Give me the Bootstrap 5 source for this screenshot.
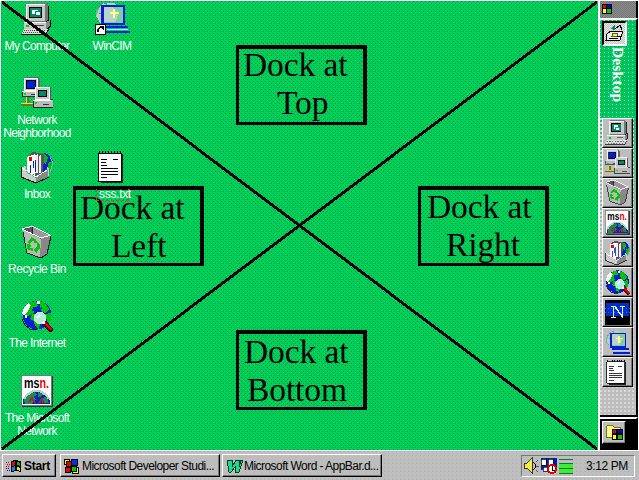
<!DOCTYPE html>
<html lang="en">
<head>
<meta charset="utf-8">
<meta name="viewport" content="width=device-width, initial-scale=1">
<title>Desktop</title>
<link href="https://cdn.jsdelivr.net/npm/bootstrap@5.3.0/dist/css/bootstrap.min.css" rel="stylesheet">
<style>
body{width:639px;height:480px;font:12px/14px "Liberation Sans",sans-serif;letter-spacing:-.55px;color:#000;background:#bdbdbd}
svg{display:block;flex:none;shape-rendering:crispEdges}
.desk{width:598px;height:450px;border-left:1px solid #fff;border-top:1px solid #fff;
 background:radial-gradient(circle at .5px .5px,#009848 .6px,transparent .7px) 0 0/4px 4px,radial-gradient(circle at .5px .5px,#009848 .6px,transparent .7px) 2px 2px/4px 4px,#00d058}
.shortcut{width:76px;color:#fff;text-align:center;line-height:13px;letter-spacing:-.65px}
.shortcut>div{padding-top:5px}
.spot{position:absolute}
.dock{width:131px;height:80px;border:solid #000;border-width:4px 4px 3px 3px;font:33.5px/38px "Liberation Serif",serif;letter-spacing:-.1px;white-space:pre}
.side{width:41px;height:450px;border-top:1px solid #fff;border-left:2px solid #fff;border-right:1px solid #fff;background:#bdbdbd}
.side>*{border-right:2px solid #000}
.head{height:17px;background:repeating-conic-gradient(#777 0 25%,#8a8a8a 0 50%) 0 0/2px 2px}
.green{height:100px;border-top:2px solid #fff;background:radial-gradient(circle at .5px .5px,#70e8a8 .6px,transparent .7px) 0 0/4px 4px,radial-gradient(circle at .5px .5px,#009850 .6px,transparent .7px) 2px 2px/4px 4px,#00c460}
.fade-area{height:297px;background:radial-gradient(circle at 1px 1px,#d8d8d8 .8px,transparent .9px) 0 0/4px 4px,linear-gradient(#20c070,#70bd98 60px,#bdbdbd 145px)}
.tray-end{border-top:2px solid #fff}
.raised{background:#bdbdbd;border:1px solid;border-color:#fff #000 #000 #fff;box-shadow:inset -1px -1px #777}
.tool{width:31px;height:29.9px}
.sunk{border:1px solid;border-color:#777 #fff #fff #777}
.pressed{width:25px;height:25px;border:2px solid;border-color:#000 #fff #fff #000;background:repeating-conic-gradient(#e4e4e4 0 25%,#c4c4c4 0 50%) 0 0/2px 2px}
.vert{writing-mode:vertical-rl;width:18px;margin-left:9px;margin-top:-3px;font:bold 15.5px/18px "Liberation Serif",serif;letter-spacing:.15px;color:#fff}
.bar{height:30px;border-top:1px solid #fff;background:radial-gradient(circle at .5px .5px,#b0b0b0 .6px,transparent .7px) 0 0/4px 4px,#bebebe}
.task{height:23px}
.filename{width:33px;height:12px;line-height:10px;padding-left:2px;border:1px dashed #e04020;border-top:0;letter-spacing:-.3px}
</style>
<script src="https://cdn.jsdelivr.net/npm/bootstrap@5.3.0/dist/js/bootstrap.bundle.min.js"></script>
</head>
<body class="overflow-hidden">
<svg width="0" height="0" class="spot" aria-hidden="true"><defs>
 <symbol id="pc" viewBox="0 0 32 32">
  <path d="M6 0h18l3 2v16l-2 2H6z" fill="#777"/><path d="M5 1h19v17H5z" fill="#c8c8c8"/><path d="M5 1.5h19M5.500 1v17" stroke="#fff"/><path d="M8 4h13v11H8z" fill="#000"/><path d="M9 5h11v9H9z" fill="#008c60"/><path d="M11 7h6v4h-6z" fill="#fff"/><path d="M14 9h5v4h-5z" fill="#e8ffff" stroke="#007878"/>
  <path d="M27 3v15l-3 3" fill="none" stroke="#000"/><path d="M3 19h23l3-2v7l-3 3H3z" fill="#888"/><path d="M3 19h22v7H3z" fill="#c8c8c8"/><path d="M3 19.500h22" stroke="#fff"/><path d="M5 22h3v2H5z" fill="#0c0"/><path d="M15 22.500h8" stroke="#444"/><path d="M29 17v7l-3 3" stroke="#000" fill="none"/>
  <path d="M3 26h21l4 0-3 6H0z" fill="#ddd"/><path d="M0 31.500h25l3-5" stroke="#111" fill="none"/><path d="M3 27.500h22M2 29.500h22" stroke="#444" stroke-dasharray="1 1" fill="none"/></symbol>
 <symbol id="net" viewBox="0 0 32 32">
  <path d="M4 0h13l2 2v13H4z" fill="#666"/><path d="M3 1h13v12H3z" fill="#c8c8c8" stroke="#fff"/><path d="M5 3h9v8H5z" fill="#0020d8" stroke="#000"/><path d="M1 14h16l2-1v6H1z" fill="#bbb" stroke="#333"/><path d="M1 14h16" stroke="#fff"/><path d="M3 17h2" stroke="#0d0" stroke-width="2"/><path d="M10 17h5" stroke="#333"/>
  <path d="M6 20v6M0 27h14" stroke="#777700" stroke-width="3"/><path d="M5 20v6M0 26h14" stroke="#dede70"/>
  <path d="M15 10h13l2 2v12H15z" fill="#555"/><path d="M14 10h14v12H14z" fill="#c8c8c8" stroke="#fff"/><path d="M17 13h8v6h-8z" fill="#008c60" stroke="#000"/><path d="M12 23h18l2-1v8H12z" fill="#bbb" stroke="#222"/><path d="M12 23h18" stroke="#fff"/><path d="M14 26h2" stroke="#0d0" stroke-width="2"/><path d="M22 27h6" stroke="#333"/></symbol>
 <symbol id="inbox" viewBox="0 0 32 32">
  <circle cx="22" cy="12" r="10" fill="#0020d8"/><path d="M16 3l6-1 5 4-2 7-4-3zM27 12l4-2v7l-4 4z" fill="#00c000"/><path d="M29 6l3 6-3 9" stroke="#9ac" fill="none"/>
  <path d="M6 6L12 1l11 2-1 20-9 3z" fill="#555"/><path d="M6 6l8-3v21l-8-3z" fill="#fff"/><path d="M14 4l3-1v19h-3zM18 5l2-1v18h-2z" fill="#eee"/><path d="M8 6h3v4H8z" fill="#e00"/><path d="M9 14v8M12 10v7M14 9v12" stroke="#0020c8"/>
  <path d="M1 16l4-1v6l10 6 11-7v-4l2 2v7L15 32 1 26z" fill="#ccc"/><path d="M15 27l12-8v7L15 32z" fill="#888"/><path d="M0 16v10l15 6 13-6" stroke="#111" fill="none"/><path d="M1 17l14 9 11-7" stroke="#fff" fill="none"/></symbol>
 <symbol id="bin" viewBox="0 0 32 32">
  <path d="M1 3l10-3 19 9-4 19-7 4L6 27z" fill="#b8b8b8"/><path d="M20 13l10-4-4 19-7 4z" fill="#888"/><path d="M2 3l9-2 18 8-9 4z" fill="#555"/><path d="M12 1v9l9 3 8-4z" fill="#999"/><path d="M1 3l19 9 10-3M1 3l10-3 18 9" stroke="#fff" fill="none"/><path d="M2 6l4 21 14 5 6-4 4-18M11 1v7" stroke="#222" fill="none"/>
  <path d="M8 17l3-4 4 2M17 17l1 5-3 2M12 24l-5-2 1-3" stroke="#00c800" stroke-width="2.6" fill="none"/><path d="M13 12l4 5h-4zM16 21v6l-4-3zM5 19l4-2 1 4z" fill="#00c800"/></symbol>
 <symbol id="globe" viewBox="0 0 32 32">
  <circle cx="16" cy="15" r="14.5" fill="#0020d8"/><path d="M4 7l6-5 5-1 2 5-4 3v4l-6 3-4-2zM18 1l6 2 4 6-3 4-4-1-2-6zM11 14l9 1 3 5-4 4-1 5-4-3-1-5-4-2zM24 14l6-1v7l-3 3z" fill="#00c800"/><path d="M3 7l4-4 3 2-3 6-4 4-2-1zM16 1h3v3h-3zM4 15h2v3H4z" fill="#fff"/><path d="M12 8h9M11 10h8" stroke="#0020d8" stroke-width="2" stroke-dasharray="3 1"/><path d="M1 19l3 6 5 4 7 1" stroke="#000" fill="none"/></symbol>
 <symbol id="web" viewBox="0 0 32 32"><use href="#globe"/><circle cx="19" cy="18" r="5.500" fill="#a8f0dc" stroke="#ddd" stroke-width="1.5"/><path d="M16 18l3-3" stroke="#fff" stroke-width="2"/><path d="M23 23l8 8" stroke="#500" stroke-width="5"/><path d="M24 23l7 7" stroke="#e00" stroke-width="2.5"/><path d="M22 22l2 2" stroke="#fff" stroke-width="2"/></symbol>
 <symbol id="msn" viewBox="0 0 32 32"><path d="M1 1h31v31H1z" fill="#333"/><path d="M0 0h30v30H0z" fill="#fff" stroke="#777"/><text x="3" y="13" font-family="Liberation Sans,sans-serif" font-weight="bold" font-size="14" letter-spacing="0" textLength="25" lengthAdjust="spacingAndGlyphs">ms<tspan fill="#e00">n.</tspan></text>
  <path d="M2 29v-4l4-5 6-4h7l6 4 4 6v3z" fill="#0028b8"/><path d="M3 25l5-6 6-2 2 3-4 2 3 3-5 4H4zM17 17l5 2-2 3h-3zM20 23l6-1 2 6h-7z" fill="#208850"/><path d="M8 27l3-4 3 5M18 28l3-4 2 4" stroke="#a02828" stroke-width="2" fill="none"/><path d="M3 24l3-4 6-4h7l6 4 3 4" stroke="#bcc" fill="none" stroke-width="2"/></symbol>
 <symbol id="note" viewBox="0 0 32 32"><path d="M5 3h22v29H5z" fill="#222"/><path d="M2 2h23v28H2z" fill="#fff" stroke="#000"/><path d="M3 1h22" stroke="#000" stroke-width="3" stroke-dasharray="1 2"/><path d="M4 3h20" stroke="#fff" stroke-dasharray="2 1"/><path d="M5 8h6M17 8h5M5 11h5M5 14h6M5 17h17M5 20h17M5 23h17M5 26h6" stroke="#000"/></symbol>
 <symbol id="cim" viewBox="0 0 34 32"><circle cx="13" cy="12" r="11.500" fill="#70b890"/><path d="M7 1h12l5 5v15H6l-4-7z" fill="#b8d0c4"/><path d="M3 7l4-5 5-1M2 15l3 5M7 5l9 8M12 1v18M5 11h16" stroke="#668877" fill="none" stroke-dasharray="2 1"/><path d="M8 4h20v18H8z" fill="none" stroke="#0020d8" stroke-width="2"/><path d="M9 5h18v16H9z" fill="#80cca4"/><path d="M9 5h9l5 7-3 8H9z" fill="#b8d4c8"/><path d="M19 7v9M15 11h9" stroke="#ffff90" stroke-width="1.5"/><path d="M28 5v18M10 25h22M11 30h23" stroke="#0020d8" stroke-width="2"/><path d="M12 27h20" stroke="#c8d8ff"/></symbol>
 <symbol id="logo" viewBox="0 0 10 10"><path d="M0 0h10v10H0z" fill="#000"/><path d="M1 1h3v3H1z" fill="#e00"/><path d="M5 1h4v3H5z" fill="#00d"/><path d="M1 5h3v4H1z" fill="#ff0"/><path d="M5 5h4v4H5z" fill="#0c0"/></symbol>
</defs></svg>

<div class="d-flex">
 <main class="desk position-relative overflow-hidden">
  <div class="spot shortcut" style="left:-2px;top:1px"><svg class="mx-auto" width="32" height="33"><use href="#pc"/></svg><div>My Computer</div></div>
  <div class="spot shortcut" style="left:73px;top:1px"><svg class="mx-auto" width="36" height="33" viewBox="0 0 34 33" preserveAspectRatio="none"><use href="#cim" width="34" height="32"/><path d="M1 22h10v10H1z" fill="#fff" stroke="#000"/><path d="M3.500 30v-2l3-3" fill="none" stroke="#000" stroke-width="1.5"/><path d="M5 24h4v4z"/></svg><div>WinCIM</div></div>
  <div class="spot shortcut" style="left:-2px;top:76px"><svg class="mx-auto" width="32" height="32"><use href="#net"/></svg><div>Network<br>Neighborhood</div></div>
  <div class="spot shortcut" style="left:-2px;top:150px"><svg class="mx-auto" width="32" height="32"><use href="#inbox"/></svg><div>Inbox</div></div>
  <div class="spot shortcut" style="left:73px;top:150px"><svg class="mx-auto" width="32" height="32"><use href="#note"/></svg></div>
  <div class="spot shortcut" style="left:-2px;top:225px"><svg class="mx-auto" width="32" height="32"><use href="#bin"/></svg><div style="letter-spacing:-.5px">Recycle Bin</div></div>
  <div class="spot shortcut" style="left:-2px;top:299px"><svg class="mx-auto" width="32" height="32"><use href="#web"/></svg><div>The Internet</div></div>
  <div class="spot shortcut" style="left:-2px;top:374px"><svg class="mx-auto" width="32" height="32"><use href="#msn"/></svg><div>The Microsoft<br>Network</div></div>
  <svg class="spot top-0 start-0" width="597" height="449"><path d="M1 1L596 448M596 1L1 448" stroke="#000" stroke-width="3"/></svg>
  <div class="spot dock" style="left:235px;top:44px"><div style="padding-left:4px;margin-top:-3px">Dock at</div><div style="padding-left:38px">Top</div></div>
  <div class="spot dock" style="left:72px;top:185px"><div style="padding-left:4px;margin-top:-1px">Dock at</div><div style="padding-left:35px">Left</div></div>
  <div class="spot dock" style="left:417px;top:185px"><div style="padding-left:6px;margin-top:-2px">Dock at</div><div style="padding-left:25px">Right</div></div>
  <div class="spot dock" style="left:235px;top:329px"><div style="padding-left:5px;margin-top:-1px">Dock at</div><div style="padding-left:8px">Bottom</div></div>
  <div class="spot text-white filename" style="left:95px;top:188px">sss.txt</div>
 </main>

 <aside class="side d-flex flex-column">
  <div class="head flex-shrink-0"><svg width="12" height="15" viewBox="-2 -3 12 15"><use href="#logo" width="10" height="10"/></svg></div>
  <div class="green flex-shrink-0 d-flex flex-column">
   <div class="pressed flex-shrink-0" style="margin:1px 0 0 2px"><svg width="21" height="21" viewBox="0 0 21 21"><path d="M3 11l4-3h12l-3 9H2z" fill="#eee" stroke="#000"/><path d="M5 15h9M12 13h5" stroke="#000"/><path d="M9 10h5l-1 3H8z" fill="#ff0" stroke="#555"/><path d="M6 6l5-4v5z" fill="#008850"/><path d="M11 6l5-4 2 5" stroke="#000" fill="none"/></svg></div>
   <div class="vert pt-1">Desktop</div>
  </div>
  <div class="fade-area flex-shrink-0">
   <div class="d-flex flex-column align-items-start" style="padding-left:2px">
    <div class="tool raised d-flex align-items-center justify-content-center"><svg width="25" height="25"><use href="#pc"/></svg></div>
    <div class="tool raised d-flex align-items-center justify-content-center"><svg width="25" height="25"><use href="#net"/></svg></div>
    <div class="tool raised d-flex align-items-center justify-content-center"><svg width="25" height="25"><use href="#bin"/></svg></div>
    <div class="tool raised d-flex align-items-center justify-content-center"><svg width="25" height="25"><use href="#msn"/></svg></div>
    <div class="tool raised d-flex align-items-center justify-content-center"><svg width="25" height="25"><use href="#inbox"/></svg></div>
    <div class="tool raised d-flex align-items-center justify-content-center"><svg width="25" height="25"><use href="#web"/></svg></div>
    <div class="tool raised d-flex align-items-center justify-content-center"><svg width="25" height="25" viewBox="0 0 25 25"><path d="M0 0h25v25H0z" fill="#000"/><path d="M1 3h23v13H1z" fill="#0030c8"/><path d="M0 8h25M0 12h25" stroke="#2060f0" stroke-dasharray="1 2"/><path d="M6 6h4l7 10V7M8 7v10M6 17h5M15 6h5M10 7l8 11" stroke="#e8e8ff" fill="none"/></svg></div>
    <div class="tool raised d-flex align-items-center justify-content-center"><svg width="25" height="25"><use href="#cim"/></svg></div>
    <div class="tool raised d-flex align-items-center justify-content-center"><svg width="25" height="25"><use href="#note"/></svg></div>
   </div>
  </div>
  <div style="height:2px" class="bg-black"></div>
  <div class="tray-end flex-grow-1 bg-black"><div class="raised" style="width:24px;height:23px;margin:2px 0 0 2px"><svg width="21" height="20" viewBox="0 0 21 20"><path d="M3 15V5l2-2h4l2 2h6v10z" fill="#ffff90" stroke="#777700"/><use href="#logo" x="9" y="7" width="11" height="11"/></svg></div></div>
 </aside>
</div>

<footer class="bar d-flex align-items-center">
 <div class="task raised d-flex align-items-center fw-bold" style="width:54px;margin-left:2px;padding-left:3px;letter-spacing:-.3px"><svg width="15" height="14" viewBox="0 0 15 14"><path d="M5 2l4-1 6 1v11l-5-1-5 1z" fill="#000"/><path d="M6 3l3-1v4L6 7z" fill="#e00"/><path d="M11 3l3 1v3l-3-1z" fill="#0b0"/><path d="M6 8l3-1v4l-3 1z" fill="#08f"/><path d="M11 8l3 1v3l-3-1z" fill="#ee0"/><path d="M0 3h4M1 5h3M0 7h4" stroke="#b00" stroke-dasharray="1 1"/><path d="M0 9h4M1 11h3" stroke="#00c" stroke-dasharray="1 1"/></svg><span style="padding-left:3px">Start</span></div>
 <div class="task raised d-flex align-items-center" style="width:160px;margin-left:4px;padding-left:2px"><svg width="16" height="16" viewBox="0 0 16 16"><path d="M1 1h5v5H1zM9 9h6v6H9z" fill="#ff0" stroke="#000"/><path d="M8 1h6v6H8z" fill="#0030e0" stroke="#000"/><path d="M3 3h5v5H3z" fill="#e00" stroke="#000"/><path d="M2 9h5v5H2z" fill="#e00" stroke="#000"/><path d="M8 8h5v5H8z" fill="#0c0" stroke="#000"/></svg><span class="text-nowrap" style="padding-left:3px">Microsoft Developer Studi...</span></div>
 <div class="task raised d-flex align-items-center" style="width:160px;margin-left:2px;padding-left:3px"><svg width="17" height="16" viewBox="0 0 17 16"><path d="M1 2h5v7l4-7h3v7l2-7h2l-4 12H9V9l-4 5H3z" fill="#20d890" stroke="#003c28"/></svg><span class="text-nowrap" style="padding-left:1px">Microsoft Word - AppBar.d...</span></div>
 <div class="task sunk d-flex align-items-center ms-auto" style="width:114px;height:22px;margin-right:4px;padding-left:1px">
  <svg width="52" height="18" viewBox="0 0 52 18"><path d="M1 6h3l5-5v15l-5-5H1z" fill="#ee4" stroke="#333"/><path d="M10 5l2 2v4l-2 2" stroke="#000" fill="none"/><path d="M13 5l2-2M13 9h3M13 13l2 2" stroke="#555"/><path d="M18 1h16v12H18z" fill="#0020a8"/><path d="M18 2h5v6h-5zM25 2h5v6h-5zM20 10h12v4H20z" fill="#fff" stroke="#000" stroke-width=".7"/><circle cx="29" cy="12" r="4" fill="#fff" stroke="#d00" stroke-width="2"/><path d="M29 9v4h3" stroke="#000" fill="none"/><path d="M36 7h14v9H36z" fill="#40ec30"/><path d="M36 2h14M36 6h14M36 11h14M36 16h14" stroke="#087830"/></svg>
  <span style="padding-left:11px;letter-spacing:-.4px">3:12 PM</span></div>
</footer>
</body>
</html>
